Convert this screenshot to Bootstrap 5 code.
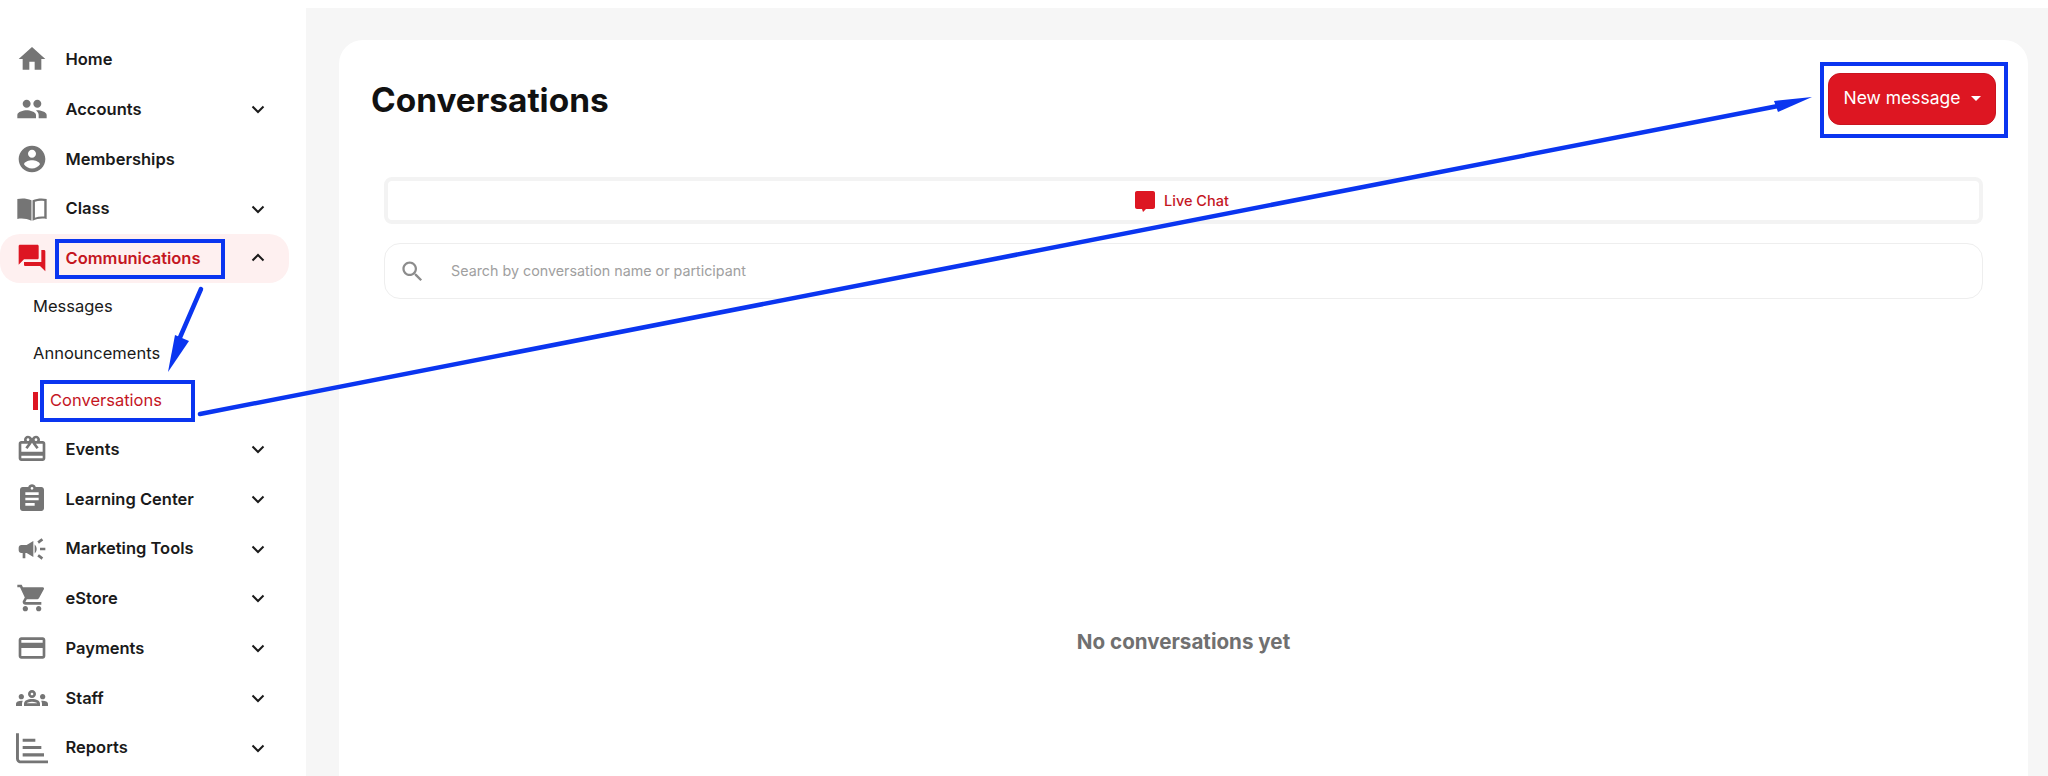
<!DOCTYPE html>
<html lang="en">
<head>
    <meta charset="UTF-8">
    <meta name="viewport" content="width=device-width, initial-scale=1.0">
    <title>Conversations</title>
    <link href="https://cdn.jsdelivr.net/npm/bootstrap@5.3.0/dist/css/bootstrap.min.css" rel="stylesheet">
    <style>
        html, body {
            height: 776px;
            overflow: hidden;
        }
        body {
            font-family: Inter, "Liberation Sans", sans-serif;
            background: #fff;
            color: #1a1a1a;
        }
        .side-col {
            width: 306px;
            padding-top: 34.5px;
            padding-right: 17px;
            flex-shrink: 0;
        }
        .side-item {
            height: 49.75px;
            padding-left: 16px;
            padding-right: 19px;
            color: #1a1a1a;
            font-size: 16.5px;
            font-weight: 600;
            text-decoration: none;
            border-radius: 20px;
        }
        .side-item.is-open {
            background: #fef0f0;
            color: #c4161f;
        }
        .side-icon {
            width: 32px;
            height: 32px;
            margin-right: 17.5px;
            fill: #757575;
            flex-shrink: 0;
        }
        .is-open .side-icon {
            fill: #dd1622;
        }
        .side-chevron {
            width: 24px;
            height: 24px;
            fill: none;
            stroke: #1a1a1a;
            stroke-width: 2;
        }
        .side-sub {
            height: 47px;
            padding-left: 33px;
            color: #1a1a1a;
            font-size: 16.5px;
            text-decoration: none;
        }
        .side-sub.is-current {
            color: #c4161f;
            padding-left: 0;
            margin-left: 33px;
        }
        .sub-mark {
            width: 5px;
            height: 18px;
            margin-right: 12px;
            background: #dd1622;
        }
        .main-col {
            margin-top: 8px;
            padding: 32px 20px 0 33px;
            background: #f6f6f6;
            height: 768px;
        }
        .main-panel {
            height: 736px;
            padding: 33px 32px 0 32px;
            background: #fff;
            border-radius: 24px 24px 0 0;
        }
        .page-title {
            margin: 0;
            padding-top: 2px;
            font-size: 33.4px;
            font-weight: 700;
            color: #111;
        }
        .new-btn {
            width: 168px;
            height: 52px;
            padding: 0 0 2px;
            font-size: 17.5px;
            color: #fff;
            background: #dd1622;
            border: 1px solid #c9141f;
            border-radius: 12px;
        }
        .new-btn:hover, .new-btn:active {
            color: #fff;
            background: #c9141f;
        }
        .new-btn::after {
            margin-left: 10px;
            vertical-align: .18em;
        }
        .panel-body {
            padding: 0 13px;
        }
        .chat-tab {
            height: 47px;
            margin-top: 52px;
            padding-right: 5px;
            border: 4px solid #f3f3f3;
            border-radius: 8px;
            color: #c4161f;
            font-size: 14.5px;
            font-weight: 500;
        }
        .chat-tab svg {
            width: 24px;
            height: 24px;
            margin-right: 7px;
            fill: #dd1622;
        }
        .search-wrap {
            height: 56px;
            margin-top: 19px;
            border: 1px solid #eee;
            border-radius: 16px;
            padding-left: 14px;
        }
        .search-wrap svg {
            width: 27px;
            height: 27px;
            margin-right: 23px;
            fill: #8c8c8c;
        }
        .search-input {
            flex: 1;
            border: 0;
            outline: 0;
            background: transparent;
            font-size: 14.3px;
        }
        .search-input::placeholder {
            color: #a0a0a0;
        }
        .empty-note {
            margin-top: 328px;
            text-align: center;
            font-size: 20.6px;
            font-weight: 700;
            color: #707070;
        }
        .note-layer {
            position: absolute;
            top: 0;
            left: 0;
            width: 2048px;
            height: 776px;
            pointer-events: none;
        }
    </style>
</head>
<body>
    <div class="d-flex">
        <!-- Sidebar -->
        <nav class="side-col d-flex flex-column">
            <a href="#" class="side-item d-flex align-items-center">
                <svg class="side-icon" viewBox="0 0 24 24"><path d="M10 20v-6h4v6h5v-8h3L12 3 2 12h3v8z"/></svg>
                <span class="flex-grow-1">Home</span>
            </a>
            <a href="#" class="side-item d-flex align-items-center">
                <svg class="side-icon" viewBox="0 0 24 24"><path d="M16 11c1.66 0 2.99-1.34 2.99-3S17.66 5 16 5c-1.66 0-3 1.34-3 3s1.34 3 3 3zm-8 0c1.66 0 2.99-1.34 2.99-3S9.66 5 8 5C6.34 5 5 6.34 5 8s1.34 3 3 3zm0 2c-2.33 0-7 1.17-7 3.5V19h14v-2.5c0-2.33-4.67-3.5-7-3.5zm8 0c-.29 0-.62.02-.97.05 1.16.84 1.97 1.97 1.97 3.45V19h6v-2.5c0-2.33-4.67-3.5-7-3.5z"/></svg>
                <span class="flex-grow-1">Accounts</span>
                <svg class="side-chevron" viewBox="0 0 24 24"><path d="M6.5 9.5 12 15l5.5-5.5"/></svg>
            </a>
            <a href="#" class="side-item d-flex align-items-center">
                <svg class="side-icon" viewBox="0 0 24 24"><path d="M12 2C6.48 2 2 6.48 2 12s4.48 10 10 10 10-4.48 10-10S17.52 2 12 2zm0 3c1.66 0 3 1.34 3 3s-1.34 3-3 3-3-1.34-3-3 1.34-3 3-3zm0 14.2c-2.5 0-4.71-1.28-6-3.22.03-1.99 4-3.08 6-3.08 1.99 0 5.97 1.09 6 3.08-1.29 1.94-3.5 3.22-6 3.22z"/></svg>
                <span class="flex-grow-1">Memberships</span>
            </a>
            <a href="#" class="side-item d-flex align-items-center">
                <svg class="side-icon" viewBox="0 0 24 24"><path d="M1 4.5c3.5-.8 7-.6 10.6 1v15.3C8 19.2 4.5 18.8 1 19.5z"/><path fill-rule="evenodd" d="M23 4.5c-3.5-.8-7-.6-10.6 1v15.3c3.6-1.6 7.1-2 10.6-1.3zm-1.8 1.5v11.7c-2.5-.3-4.9 0-7 .9V6.6c2.2-.9 4.6-1 7-.6z"/></svg>
                <span class="flex-grow-1">Class</span>
                <svg class="side-chevron" viewBox="0 0 24 24"><path d="M6.5 9.5 12 15l5.5-5.5"/></svg>
            </a>
            <a href="#" class="side-item is-open d-flex align-items-center">
                <svg class="side-icon" viewBox="0 0 24 24"><path d="M21 6h-2v9H6v2c0 .55.45 1 1 1h11l4 4V7c0-.55-.45-1-1-1zm-4 6V3c0-.55-.45-1-1-1H3c-.55 0-1 .45-1 1v14l4-4h10c.55 0 1-.45 1-1z"/></svg>
                <span class="flex-grow-1">Communications</span>
                <svg class="side-chevron" viewBox="0 0 24 24"><path d="M6.5 14.5 12 9l5.5 5.5"/></svg>
            </a>
            <a href="#" class="side-sub d-flex align-items-center">Messages</a>
            <a href="#" class="side-sub d-flex align-items-center">Announcements</a>
            <a href="#" class="side-sub is-current d-flex align-items-center"><span class="sub-mark"></span>Conversations</a>
            <a href="#" class="side-item d-flex align-items-center">
                <svg class="side-icon" viewBox="0 0 24 24"><path d="M20 6h-2.18c.11-.31.18-.65.18-1 0-1.66-1.34-3-3-3-1.05 0-1.96.54-2.5 1.35l-.5.67-.5-.68C10.96 2.54 10.05 2 9 2 7.34 2 6 3.34 6 5c0 .35.07.69.18 1H4c-1.11 0-1.99.89-1.99 2L2 19c0 1.11.89 2 2 2h16c1.11 0 2-.89 2-2V8c0-1.11-.89-2-2-2zm-5-2c.55 0 1 .45 1 1s-.45 1-1 1-1-.45-1-1 .45-1 1-1zM9 4c.55 0 1 .45 1 1s-.45 1-1 1-1-.45-1-1 .45-1 1-1zm11 15H4v-2h16v2zm0-5H4V8h5.08L7 10.83 8.62 12 11 8.76l1-1.36 1 1.36L15.38 12 17 10.83 14.92 8H20v6z"/></svg>
                <span class="flex-grow-1">Events</span>
                <svg class="side-chevron" viewBox="0 0 24 24"><path d="M6.5 9.5 12 15l5.5-5.5"/></svg>
            </a>
            <a href="#" class="side-item d-flex align-items-center">
                <svg class="side-icon" viewBox="0 0 24 24"><path d="M19 3h-4.18C14.4 1.84 13.3 1 12 1c-1.3 0-2.4.84-2.82 2H5c-1.1 0-2 .9-2 2v14c0 1.1.9 2 2 2h14c1.1 0 2-.9 2-2V5c0-1.1-.9-2-2-2zm-7 0c.55 0 1 .45 1 1s-.45 1-1 1-1-.45-1-1 .45-1 1-1zm2 14H7v-2h7v2zm3-4H7v-2h10v2zm0-4H7V7h10v2z"/></svg>
                <span class="flex-grow-1">Learning Center</span>
                <svg class="side-chevron" viewBox="0 0 24 24"><path d="M6.5 9.5 12 15l5.5-5.5"/></svg>
            </a>
            <a href="#" class="side-item d-flex align-items-center">
                <svg class="side-icon" viewBox="0 0 24 24"><path d="M18 11v2h4v-2h-4zm-2 6.61c.96.71 2.21 1.65 3.2 2.39.4-.53.8-1.07 1.2-1.6-.99-.74-2.24-1.68-3.2-2.4-.4.54-.8 1.08-1.2 1.61zM20.4 5.6c-.4-.53-.8-1.07-1.2-1.6-.99.74-2.24 1.68-3.2 2.4.4.53.8 1.07 1.2 1.6.96-.72 2.21-1.65 3.2-2.4zM4 9c-1.1 0-2 .9-2 2v2c0 1.1.9 2 2 2h1v4h2v-4h1l5 3V6L8 9H4zm11.5 3c0-1.33-.58-2.53-1.5-3.35v6.69c.92-.81 1.5-2.01 1.5-3.34z"/></svg>
                <span class="flex-grow-1">Marketing Tools</span>
                <svg class="side-chevron" viewBox="0 0 24 24"><path d="M6.5 9.5 12 15l5.5-5.5"/></svg>
            </a>
            <a href="#" class="side-item d-flex align-items-center">
                <svg class="side-icon" viewBox="0 0 24 24"><path d="M7 18c-1.1 0-1.99.9-1.99 2S5.9 22 7 22s2-.9 2-2-.9-2-2-2zM1 2v2h2l3.6 7.59-1.35 2.45c-.16.28-.25.61-.25.96 0 1.1.9 2 2 2h12v-2H7.42c-.14 0-.25-.11-.25-.25l.03-.12.9-1.63h7.45c.75 0 1.41-.41 1.75-1.03l3.58-6.49c.08-.14.12-.31.12-.48 0-.55-.45-1-1-1H5.21l-.94-2H1zm16 16c-1.1 0-1.99.9-1.99 2s.89 2 1.99 2 2-.9 2-2-.9-2-2-2z"/></svg>
                <span class="flex-grow-1">eStore</span>
                <svg class="side-chevron" viewBox="0 0 24 24"><path d="M6.5 9.5 12 15l5.5-5.5"/></svg>
            </a>
            <a href="#" class="side-item d-flex align-items-center">
                <svg class="side-icon" viewBox="0 0 24 24"><path d="M20 4H4c-1.11 0-1.99.89-1.99 2L2 18c0 1.11.89 2 2 2h16c1.11 0 2-.89 2-2V6c0-1.11-.89-2-2-2zm0 14H4v-6h16v6zm0-10H4V6h16v2z"/></svg>
                <span class="flex-grow-1">Payments</span>
                <svg class="side-chevron" viewBox="0 0 24 24"><path d="M6.5 9.5 12 15l5.5-5.5"/></svg>
            </a>
            <a href="#" class="side-item d-flex align-items-center">
                <svg class="side-icon" viewBox="0 0 24 24"><path d="M4 13c1.1 0 2-.9 2-2s-.9-2-2-2-2 .9-2 2 .9 2 2 2zm1.13 1.1c-.37-.06-.74-.1-1.13-.1-.99 0-1.93.21-2.78.58C.48 14.9 0 15.62 0 16.43V18h4.5v-1.61c0-.83.23-1.61.63-2.29zM20 13c1.1 0 2-.9 2-2s-.9-2-2-2-2 .9-2 2 .9 2 2 2zm4 3.43c0-.81-.48-1.53-1.22-1.85-.85-.37-1.79-.58-2.78-.58-.39 0-.76.04-1.13.1.4.68.63 1.46.63 2.29V18H24v-1.57zm-7.76-2.78c-1.17-.52-2.61-.9-4.24-.9s-3.07.39-4.24.9C6.68 14.13 6 15.21 6 16.39V18h12v-1.61c0-1.18-.68-2.26-1.76-2.74zM8.07 16c.09-.23.13-.39.91-.69.97-.38 1.99-.56 3.02-.56s2.05.18 3.02.56c.77.3.81.46.91.69H8.07zM12 8c.55 0 1 .45 1 1s-.45 1-1 1-1-.45-1-1 .45-1 1-1m0-2c-1.66 0-3 1.34-3 3s1.34 3 3 3 3-1.34 3-3-1.34-3-3-3z"/></svg>
                <span class="flex-grow-1">Staff</span>
                <svg class="side-chevron" viewBox="0 0 24 24"><path d="M6.5 9.5 12 15l5.5-5.5"/></svg>
            </a>
            <a href="#" class="side-item d-flex align-items-center">
                <svg class="side-icon" viewBox="0 0 24 24"><path d="M0 1h2.2v19c0 .8.6 1.4 1.4 1.4H24v2.1H3.5C1.5 23.5 0 22 0 20zM5 5h9.5v2.3H5zM5 10.5h14v2.3H5zM5 16h16v2.3H5z"/></svg>
                <span class="flex-grow-1">Reports</span>
                <svg class="side-chevron" viewBox="0 0 24 24"><path d="M6.5 9.5 12 15l5.5-5.5"/></svg>
            </a>
        </nav>

        <!-- Main -->
        <main class="main-col flex-grow-1">
            <div class="main-panel">
                <div class="d-flex justify-content-between align-items-center">
                    <h1 class="page-title">Conversations</h1>
                    <button type="button" class="btn new-btn dropdown-toggle">New message</button>
                </div>
                <div class="panel-body">
                    <div class="chat-tab d-flex align-items-center justify-content-center">
                        <svg viewBox="0 0 24 24"><path d="M4 2h16c1.1 0 2 .9 2 2v14c0 1.1-.9 2-2 2h-7l-3 3-1-3H4c-1.1 0-2-.9-2-2V4c0-1.1.9-2 2-2z"/></svg>
                        <span>Live Chat</span>
                    </div>
                    <div class="search-wrap d-flex align-items-center">
                        <svg viewBox="0 0 24 24"><path d="M15.5 14h-.79l-.28-.27C15.41 12.59 16 11.11 16 9.5 16 5.91 13.09 3 9.5 3S3 5.91 3 9.5 5.91 16 9.5 16c1.61 0 3.09-.59 4.23-1.57l.27.28v.79l5 4.99L20.49 19l-4.99-5zm-6 0C7.01 14 5 11.99 5 9.5S7.01 5 9.5 5 14 7.01 14 9.5 11.99 14 9.5 14z"/></svg>
                        <input type="text" class="search-input" placeholder="Search by conversation name or participant">
                    </div>
                    <div class="empty-note">No conversations yet</div>
                </div>
            </div>
        </main>
    </div>

    <!-- Annotations drawn over the screenshot -->
    <svg class="note-layer" viewBox="0 0 2048 776">
        <g fill="none" stroke="#0a35f0" stroke-width="4">
            <rect x="57" y="241" width="166" height="36"/>
            <rect x="42" y="382" width="151" height="38"/>
            <rect x="1822" y="64" width="184" height="72"/>
        </g>
        <g stroke="#0a35f0" stroke-width="4.5" stroke-linecap="round">
            <line x1="201" y1="289" x2="178" y2="342"/>
            <line x1="200" y1="414" x2="1778" y2="106"/>
        </g>
        <g fill="#0a35f0">
            <polygon points="168,372 175,335 189,341"/>
            <polygon points="1812,97 1774,101 1778,112"/>
        </g>
    </svg>

    <script src="https://cdn.jsdelivr.net/npm/bootstrap@5.3.0/dist/js/bootstrap.bundle.min.js"></script>
</body>
</html>
